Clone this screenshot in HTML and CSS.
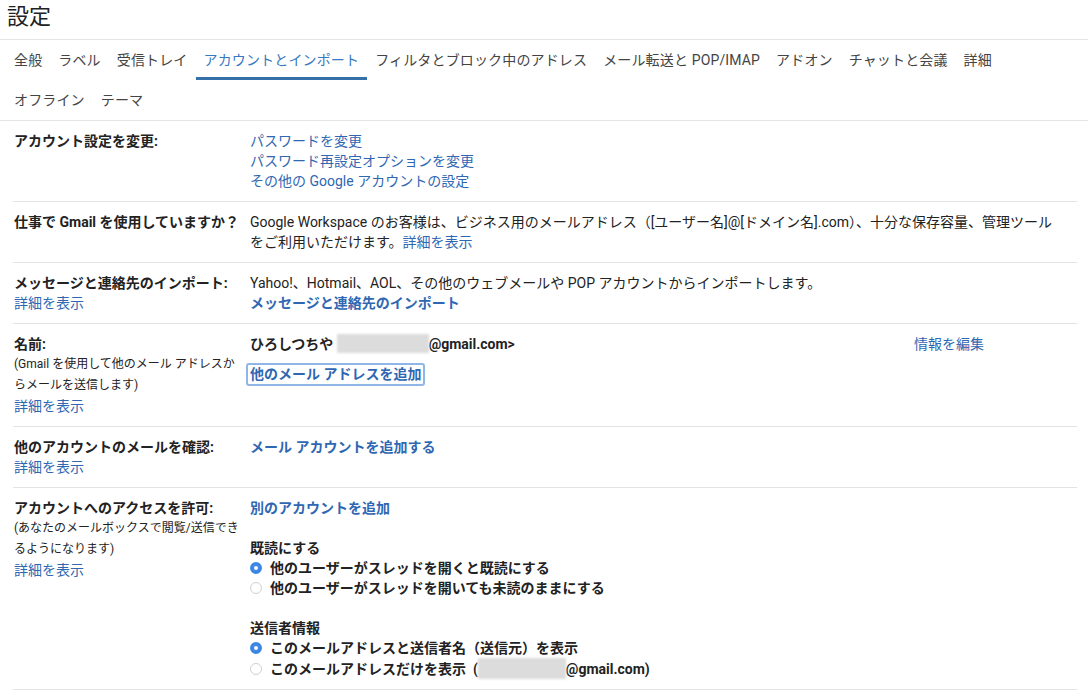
FILE: index.html
```html
<!DOCTYPE html>
<html lang="ja">
<head>
    <meta charset="UTF-8">
    <meta name="viewport" content="width=device-width, initial-scale=1.0">
    <title>設定 - Gmail</title>
    <link rel="stylesheet" href="styles.css">
</head>
<body>
<div class="page-title">設定</div>

<div class="tabs">
    <div class="tab-list">
        <a class="tab" href="#">全般</a>
        <a class="tab" href="#">ラベル</a>
        <a class="tab" href="#">受信トレイ</a>
        <a class="tab active" href="#">アカウントとインポート</a>
        <a class="tab" href="#">フィルタとブロック中のアドレス</a>
        <a class="tab" href="#">メール転送と POP/IMAP</a>
        <a class="tab" href="#">アドオン</a>
        <a class="tab" href="#">チャットと会議</a>
        <a class="tab" href="#">詳細</a>
        <a class="tab" href="#">オフライン</a>
        <a class="tab" href="#">テーマ</a>
    </div>
</div>

<div class="settings">
    <div class="row">
        <div class="label"><div class="label-title">アカウント設定を変更:</div></div>
        <div class="value link-list">
            <a href="#">パスワードを変更</a>
            <a href="#">パスワード再設定オプションを変更</a>
            <a href="#">その他の Google アカウントの設定</a>
        </div>
    </div>

    <div class="row">
        <div class="label"><div class="label-title">仕事で Gmail を使用していますか？</div></div>
        <div class="value">
            <div class="nowrap">Google Workspace のお客様は、ビジネス用のメールアドレス（[ユーザー名]@[ドメイン名].com）、十分な保存容量、管理ツール</div>
            <div>をご利用いただけます。<a href="#">詳細を表示</a></div>
        </div>
    </div>

    <div class="row">
        <div class="label">
            <div class="label-title">メッセージと連絡先のインポート:</div>
            <a class="more" href="#">詳細を表示</a>
        </div>
        <div class="value">
            <div>Yahoo!、Hotmail、AOL、その他のウェブメールや POP アカウントからインポートします。</div>
            <a class="strong-link" href="#">メッセージと連絡先のインポート</a>
        </div>
    </div>

    <div class="row">
        <div class="label">
            <div class="label-title">名前:</div>
            <div class="note">(Gmail を使用して他のメール アドレスか<br>らメールを送信します)</div>
            <a class="more" href="#">詳細を表示</a>
        </div>
        <div class="value">
            <div class="name-line">
                <span class="name-main">ひろしつちや <span class="blur"></span>@gmail.com&gt;</span>
                <a href="#">情報を編集</a>
            </div>
            <button class="add-address">他のメール アドレスを追加</button>
        </div>
    </div>

    <div class="row">
        <div class="label">
            <div class="label-title">他のアカウントのメールを確認:</div>
            <a class="more" href="#">詳細を表示</a>
        </div>
        <div class="value">
            <a class="strong-link" href="#">メール アカウントを追加する</a>
        </div>
    </div>

    <div class="row">
        <div class="label">
            <div class="label-title">アカウントへのアクセスを許可:</div>
            <div class="note">(あなたのメールボックスで閲覧/送信でき<br>るようになります)</div>
            <a class="more" href="#">詳細を表示</a>
        </div>
        <div class="value">
            <a class="strong-link" href="#">別のアカウントを追加</a>
            <div class="group-title">既読にする</div>
            <label class="option"><span class="radio checked"></span>他のユーザーがスレッドを開くと既読にする</label>
            <label class="option"><span class="radio"></span>他のユーザーがスレッドを開いても未読のままにする</label>
            <div class="group-title">送信者情報</div>
            <label class="option"><span class="radio checked"></span>このメールアドレスと送信者名（送信元）を表示</label>
            <label class="option"><span class="radio"></span><span>このメールアドレスだけを表示&nbsp; (<span class="blur short"></span>@gmail.com)</span></label>
        </div>
    </div>
</div>
</body>
</html>
```

FILE: styles.css
```css
body {
    margin: 0;
    font-family: Roboto, "Noto Sans CJK JP", sans-serif;
    font-size: 14px;
    color: #222;
    background-color: #fff;
}
a {
    color: #2f67b2;
    text-decoration: none;
}
.page-title {
    height: 39px;
    line-height: 34px;
    padding-left: 7px;
    font-size: 22px;
    color: #202124;
    border-bottom: 1px solid #e6e6e6;
}
.tabs {
    border-bottom: 1px solid #e6e6e6;
}
.tab-list {
    display: flex;
    flex-wrap: wrap;
    max-width: 1020px;
    padding-left: 6px;
}
.tab {
    height: 40px;
    line-height: 40px;
    padding: 0 8px;
    color: #444;
    letter-spacing: 0.15px;
    white-space: nowrap;
}
.tab.active {
    color: #3778c0;
    box-shadow: inset 0 -3px 0 #3670a8;
}
.settings {
    padding: 0 11px 0 13px;
}
.row {
    display: flex;
    padding: 10px 0;
    line-height: 20px;
    border-bottom: 1px solid #e3e3e3;
}
.label {
    width: 236px;
    padding-left: 1px;
    flex-shrink: 0;
}
.label-title {
    font-weight: bold;
}
.note {
    font-size: 12px;
    line-height: 21px;
    white-space: nowrap;
}
.more {
    display: block;
}
.value {
    flex: 1;
}
.nowrap {
    white-space: nowrap;
}
.link-list a {
    display: block;
}
.strong-link {
    display: block;
    font-weight: bold;
}
.name-line {
    display: flex;
}
.name-main {
    width: 664px;
    font-weight: bold;
}
.blur {
    display: inline-block;
    width: 92px;
    height: 19px;
    vertical-align: -4px;
    background-color: #dcdcdc;
    filter: blur(1px);
}
.blur.short {
    width: 88px;
    height: 21px;
    vertical-align: -5px;
}
.add-address {
    display: block;
    height: 23px;
    margin: 9px 0 0 -4px;
    padding: 0 2px;
    border: 2px solid #8fb6e6;
    border-radius: 3px;
    background-color: #fff;
    font-family: inherit;
    font-size: 14px;
    font-weight: bold;
    line-height: 19px;
    color: #2f67b2;
}
.group-title {
    margin-top: 20px;
    font-weight: bold;
}
.option {
    display: flex;
    align-items: center;
    gap: 8px;
    font-weight: bold;
}
.radio {
    width: 12px;
    height: 12px;
    box-sizing: border-box;
    border: 1px solid #d0d0d0;
    border-radius: 50%;
    background-color: #fff;
}
.radio.checked {
    border: 4px solid #3d87e4;
}
```
